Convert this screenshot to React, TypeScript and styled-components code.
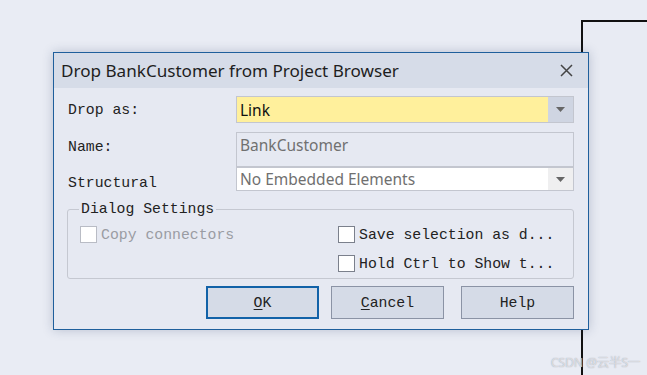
import styled, { createGlobalStyle } from 'styled-components'

const GlobalStyle = createGlobalStyle`
    html, body {
        margin: 0;
        padding: 0;
        background: #e9ecf4;
    }
    body {
        width: 647px;
        height: 375px;
        overflow: hidden;
        position: relative;
    }
`

const mono = `'Liberation Mono', 'Courier New', monospace`
const sans = `'Noto Sans', 'Open Sans', Arial, sans-serif`

const Stage = styled.div`
    position: relative;
    width: 647px;
    height: 375px;
    overflow: hidden;
`

// diagram element peeking from behind the dialog
const DiagramNode = styled.div`
    position: absolute;
    left: 581px;
    top: 20px;
    width: 80px;
    height: 400px;
    border-left: 2px solid #111;
    border-top: 2px solid #111;
    background: #e8ebf3;
`

const Dialog = styled.div`
    position: absolute;
    left: 53px;
    top: 52px;
    width: 534px;
    height: 276px;
    border: 1px solid #1f5f9c;
    background: #e6e9f2;
    box-shadow: 0 0 10px rgba(40, 60, 100, 0.25);
    display: flex;
    flex-direction: column;
`

const TitleBar = styled.div`
    height: 35px;
    background: #d6dce8;
    display: flex;
    align-items: center;
    justify-content: space-between;
    padding: 0 15px 0 7px;
    font-family: ${sans};
    font-size: 17.1px;
    color: #1e1e1e;
`

const CloseIcon = () => (
    <svg width="13" height="13" viewBox="0 0 13 13">
        <path d="M1 1 L12 12 M12 1 L1 12" stroke="#444" strokeWidth="1.5" />
    </svg>
)

const Body = styled.div`
    padding: 8px 14px 0 13px;
    display: flex;
    flex-direction: column;
`

const FormRow = styled.div<{ $h: number; $mt?: number; $labelAlign?: string }>`
    display: grid;
    grid-template-columns: 169px 338px;
    height: ${(p) => p.$h}px;
    margin-top: ${(p) => p.$mt ?? 0}px;
    align-items: ${(p) => p.$labelAlign ?? 'center'};
`

const Label = styled.div<{ $pb?: number }>`
    font-family: ${mono};
    font-size: 14.8px;
    color: #222;
    padding-left: 1px;
    padding-bottom: ${(p) => p.$pb ?? 0}px;
`

const Combo = styled.div<{ $bg: string; $btn: string; $color: string }>`
    height: 100%;
    box-sizing: border-box;
    border: 1px solid #c3c6cf;
    background: ${(p) => p.$bg};
    display: flex;
    align-items: stretch;
    font-family: ${sans};
    font-size: 15.5px;
    color: ${(p) => p.$color};
    span {
        flex: 1;
        display: flex;
        align-items: center;
        padding-left: 3px;
    }
    i {
        width: 25px;
        background: ${(p) => p.$btn};
        display: flex;
        align-items: center;
        justify-content: center;
    }
`

const TextField = styled.div`
    height: 100%;
    box-sizing: border-box;
    border: 1px solid #c3c6cf;
    font-family: ${sans};
    font-size: 15.5px;
    color: #707070;
    padding: 0 3px;
    line-height: 24px;
`

const Arrow = () => (
    <svg width="9" height="5" viewBox="0 0 9 5">
        <path d="M0 0 H9 L4.5 5 Z" fill="#666" />
    </svg>
)

const Group = styled.fieldset`
    margin: 12px 0 0 0;
    height: 79px;
    box-sizing: border-box;
    border: 1px solid #c5c8d1;
    border-radius: 3px;
    padding: 2px 0 0 12px;
    display: grid;
    grid-template-columns: 258px 1fr;
    grid-auto-rows: 29px;
    align-content: start;
    align-items: center;
    width: 507px;
    legend {
        font-family: ${mono};
        font-size: 14.8px;
        color: #222;
        padding: 0 2px;
        margin-left: -1px;
        line-height: 18px;
    }
`

const Check = styled.label<{ $disabled?: boolean }>`
    display: flex;
    align-items: center;
    gap: 4px;
    font-family: ${mono};
    font-size: 14.8px;
    color: ${(p) => (p.$disabled ? '#9a9ca3' : '#222')};
    white-space: nowrap;
    &::before {
        content: '';
        width: 17px;
        height: 17px;
        box-sizing: border-box;
        background: #fff;
        border: 1px solid ${(p) => (p.$disabled ? '#b9bcc5' : '#7b808c')};
    }
`

const ButtonRow = styled.div`
    display: flex;
    justify-content: flex-end;
    gap: 12px;
    margin-top: 7px;
    width: 507px;
`

const Btn = styled.button<{ $primary?: boolean; $ml?: number }>`
    width: 113px;
    height: 33px;
    box-sizing: border-box;
    background: #d5dbe7;
    border: ${(p) => (p.$primary ? '2px solid #1262a8' : '1px solid #8b93a5')};
    margin-left: ${(p) => p.$ml ?? 0}px;
    font-family: ${mono};
    font-size: 14.8px;
    color: #222;
    padding: 0;
    u {
        text-decoration-thickness: 1px;
        text-underline-offset: 2px;
    }
`

const Watermark = styled.div`
    position: absolute;
    right: 7px;
    bottom: 4px;
    font-family: ${sans}, 'Noto Sans CJK SC', sans-serif;
    font-size: 12.5px;
    letter-spacing: -0.3px;
    color: rgba(255, 255, 255, 0.6);
    text-shadow: 0 0 1px rgba(120, 128, 145, 0.8);
`

const App = () => {
    return (
        <Stage>
            <GlobalStyle />
            <DiagramNode />
            <Dialog>
                <TitleBar>
                    <span>Drop BankCustomer from Project Browser</span>
                    <CloseIcon />
                </TitleBar>
                <Body>
                    <FormRow $h={27}>
                        <Label>Drop as:</Label>
                        <Combo $bg="#fff09c" $btn="#cfd5e2" $color="#111">
                            <span>Link</span>
                            <i>
                                <Arrow />
                            </i>
                        </Combo>
                    </FormRow>
                    <FormRow $h={35} $mt={9}>
                        <Label $pb={6}>Name:</Label>
                        <TextField>BankCustomer</TextField>
                    </FormRow>
                    <FormRow $h={21} $labelAlign="end">
                        <Label>Structural</Label>
                        <Combo $bg="#fff" $btn="#efeff0" $color="#707070">
                            <span>No Embedded Elements</span>
                            <i>
                                <Arrow />
                            </i>
                        </Combo>
                    </FormRow>
                    <Group>
                        <legend>Dialog Settings</legend>
                        <Check $disabled>Copy connectors</Check>
                        <Check>Save selection as d...</Check>
                        <span />
                        <Check>Hold Ctrl to Show t...</Check>
                    </Group>
                    <ButtonRow>
                        <Btn $primary>
                            <u>O</u>K
                        </Btn>
                        <Btn>
                            <u>C</u>ancel
                        </Btn>
                        <Btn $ml={5}>Help</Btn>
                    </ButtonRow>
                </Body>
            </Dialog>
            <Watermark>CSDN @云半S一</Watermark>
        </Stage>
    )
}

export default App
